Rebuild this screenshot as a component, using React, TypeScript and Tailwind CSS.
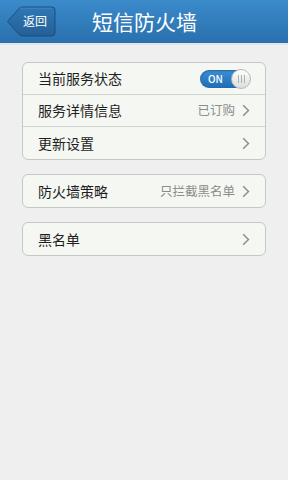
const font = { fontFamily: '"Noto Sans CJK SC", "Noto Sans", sans-serif' };

const Chevron = () => (
  <svg width="8" height="13" viewBox="0 0 8 13" className="ml-1 shrink-0">
    <path d="M1.2 1.2 L6.5 6.5 L1.2 11.8" fill="none" stroke="#8a8a8a" strokeWidth="1.4" />
  </svg>
);

const Toggle = () => (
  <div className="relative w-[50px] h-[18px] rounded-full bg-gradient-to-b from-[#3c8fd6] to-[#1f6db4] flex items-center pl-[8px] shadow-[inset_0_1px_2px_rgba(0,0,0,0.3)]">
    <span className="text-[10px] leading-none text-white font-medium">ON</span>
    <div className="absolute right-[-1px] top-[-1px] w-[20px] h-[20px] rounded-full bg-gradient-to-b from-white to-[#dcdcdc] border border-[#b8b8b8] flex items-center justify-center gap-[2px]">
      <span className="w-px h-[8px] bg-[#b0b0b0]" />
      <span className="w-px h-[8px] bg-[#b0b0b0]" />
      <span className="w-px h-[8px] bg-[#b0b0b0]" />
    </div>
  </div>
);

const Row = ({ label, value, toggle, last }: { label: string; value?: string; toggle?: boolean; last?: boolean }) => (
  <div className={`h-[32px] flex items-center pl-[15px] pr-[15px] ${last ? '' : 'border-b border-[#d0d2cd]'}`}>
    <span className="text-[14px] text-[#1e1e1e] flex-1">{label}</span>
    {toggle ? (
      <Toggle />
    ) : (
      <div className="flex items-center">
        {value && <span className="text-[12.5px] text-[#8c8c8c] mr-[3px]">{value}</span>}
        <Chevron />
      </div>
    )}
  </div>
);

export default function App() {
  return (
    <div className="w-[288px] h-[480px] bg-[#efefef] flex flex-col" style={font}>
      <div className="h-[45px] bg-gradient-to-b from-[#3b8bcb] to-[#2a70ad] flex items-center border-b-2 border-[#dfe6ec]">
        <div className="relative w-[49px] h-[31px] ml-[7px]">
          <svg width="49" height="31" viewBox="0 0 49 31" className="absolute inset-0">
            <defs>
              <linearGradient id="bk" x1="0" y1="0" x2="0" y2="1">
                <stop offset="0" stopColor="#2f78b5" />
                <stop offset="1" stopColor="#245f96" />
              </linearGradient>
            </defs>
            <path
              d="M0.5 15.5 L12 2.5 Q13.5 1 15.5 1 L45 1 Q48 1 48 4 L48 27 Q48 30 45 30 L15.5 30 Q13.5 30 12 28.5 Z"
              fill="url(#bk)"
              stroke="#1d4f7e"
              strokeWidth="1"
            />
            <path d="M13 2.2 L45 2.2" stroke="#5a9ad0" strokeWidth="0.8" opacity="0.6" />
          </svg>
          <span className="absolute left-[16px] top-[7px] text-[12px] leading-[16px] text-white">返回</span>
        </div>
        <div className="ml-[36px] text-[21px] text-white leading-none">短信防火墙</div>
      </div>

      <div className="px-[22px] pt-[17px] flex flex-col gap-[14px]">
        <div className="rounded-[6px] border border-[#c6c8c3] bg-[#f5f7f2] overflow-hidden">
          <Row label="当前服务状态" toggle />
          <Row label="服务详情信息" value="已订购" />
          <Row label="更新设置" last />
        </div>
        <div className="rounded-[6px] border border-[#c6c8c3] bg-[#f5f7f2] overflow-hidden">
          <Row label="防火墙策略" value="只拦截黑名单" last />
        </div>
        <div className="rounded-[6px] border border-[#c6c8c3] bg-[#f5f7f2] overflow-hidden">
          <Row label="黑名单" last />
        </div>
      </div>
    </div>
  );
}
